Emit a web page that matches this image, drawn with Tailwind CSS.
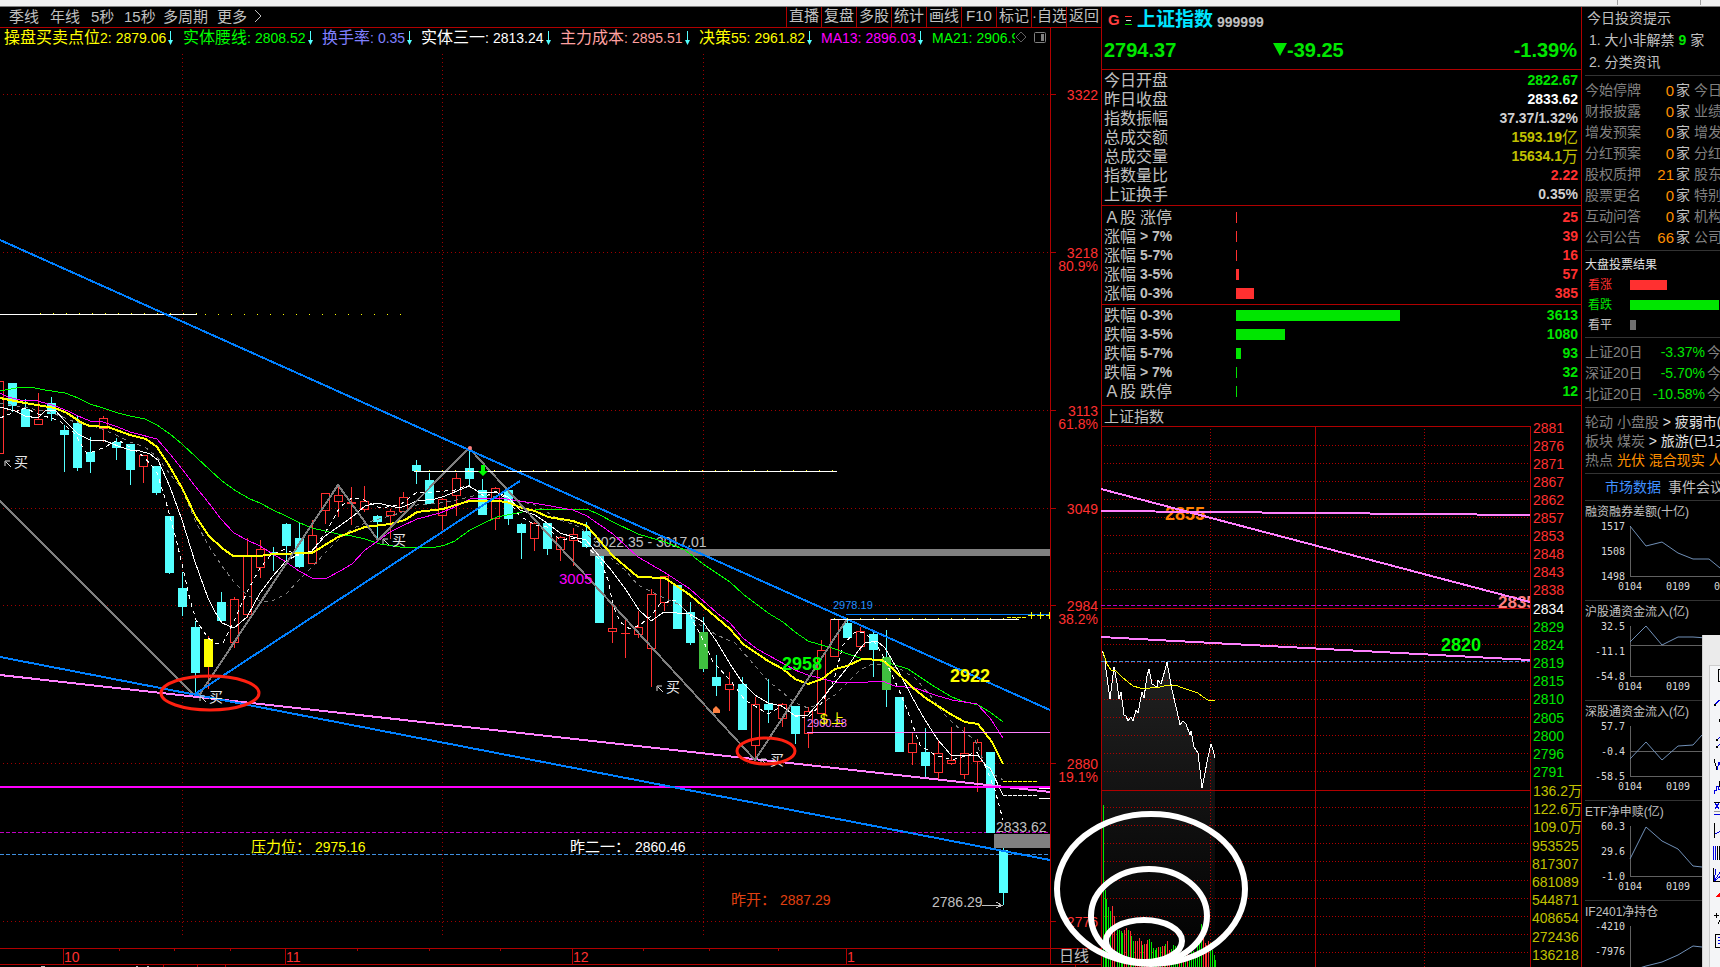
<!DOCTYPE html>
<html lang="zh-CN">
<head>
<meta charset="utf-8">
<meta name="viewport" content="width=device-width, initial-scale=1">
<title>上证指数 999999</title>
<script src="https://cdn.jsdelivr.net/npm/@tailwindcss/browser@4"></script>
</head>
<body class="bg-black">
<div class="relative flex h-screen flex-col overflow-hidden bg-black font-['Liberation_Sans','Noto_Sans_CJK_SC',sans-serif] whitespace-nowrap text-[#c0c0c0]">
  <div class="flex h-[7px] shrink-0 justify-end border-b border-[#808080] bg-[#f0f0f0] pr-[19px]">
    <div class="h-[5px] w-[84px] border-x border-[#a0a0a0]"></div>
  </div>
  <div class="flex min-h-0 flex-1">

    <!-- K-line panel -->
    <section class="flex min-w-0 flex-1 flex-col">
      <nav class="flex h-[21px] shrink-0 justify-between border-b border-[#b00000] text-[15px] leading-[15px]">
        <div class="flex pl-[9px] *:pb-[2px]">
          <button type="button" class="w-[41px] text-left">季线</button>
          <button type="button" class="w-[41px] text-left">年线</button>
          <button type="button" class="w-[33px] text-left">5秒</button>
          <button type="button" class="w-[39px] text-left">15秒</button>
          <button type="button" class="w-[54px] text-left">多周期</button>
          <button type="button" class="w-[37px] text-left">更多</button>
          <button type="button" aria-label="更多周期"><svg class="h-[14px] w-[9px]" viewBox="0 0 9 14" fill="none" stroke="#c0c0c0"><path d="M1 1L7 7L1 13"/></svg></button>
        </div>
        <div class="flex *:w-[35px] *:border-l *:border-[#b00000] *:pb-[3px] *:text-center">
          <button type="button">直播</button>
          <button type="button">复盘</button>
          <button type="button">多股</button>
          <button type="button">统计</button>
          <button type="button">画线</button>
          <button type="button">F10</button>
          <button type="button">标记</button>
          <button type="button">·自选</button>
          <button type="button">返回</button>
        </div>
      </nav>
      <div class="mr-[50px] flex h-[19px] shrink-0 border-r border-[#b00000] pl-1 leading-[18px]">
        <div id="indicators" class="flex min-w-0 max-w-[1013px] flex-1 overflow-hidden"></div>
        <svg class="mr-[3px] ml-auto h-[18px] w-[32px] shrink-0" viewBox="0 0 32 18" fill="none" stroke="#808080"><path d="M1 9L6 4L11 9L6 14Z" stroke="#606060"/><rect x="19.500" y="4.500" width="11" height="10" rx="1"/><rect x="26" y="6" width="3" height="7" fill="#808080" stroke="none"/></svg>
      </div>
      <svg id="kline" class="min-h-0 w-full flex-1" viewBox="0 47 1101 920" preserveAspectRatio="xMinYMin slice"></svg>
    </section>

    <!-- Quote panel -->
    <section class="flex w-[481px] shrink-0 flex-col border-x border-[#b00000]">
      <header class="shrink-0 border-b border-[#b00000] pr-1 pl-[2px]">
        <div class="flex h-[27px] items-center pl-1">
          <span class="w-[16px] text-[15px] font-bold text-[#ff4040]">G</span>
          <svg class="h-[12px] w-[9px]" viewBox="0 0 9 12" shape-rendering="crispEdges"><path d="M1 1.500H8" stroke="#ff3030"/><path d="M2 5.500H7" stroke="#e0e0e0"/><path d="M1 9.500H8" stroke="#00e600"/></svg>
          <h1 class="ml-1 text-[19px] font-bold text-[#00e5ff]">上证指数</h1>
          <span class="ml-1 pt-[3px] text-[14px] font-bold">999999</span>
        </div>
        <div class="flex h-[35px] items-center justify-between pb-1 text-[20px] leading-[30px] font-bold text-[#00e600]">
          <span class="w-[169px]">2794.37</span>
          <span class="flex flex-1 items-center"><svg class="h-[13px] w-[14px]" viewBox="0 0 14 13" fill="#00e600"><path d="M0 0H14L7 13Z"/></svg>-39.25</span>
          <span>-1.39%</span>
        </div>
      </header>
      <table class="block shrink-0 border-b border-[#b00000]"><tbody id="quote" class="block pt-[1px] pb-[1px]"></tbody></table>
      <table class="block shrink-0 border-b border-[#b00000]"><tbody id="rise" class="block pt-[2px] pb-[1px]"></tbody></table>
      <table class="block shrink-0 border-b border-[#b00000]"><tbody id="fall" class="block pt-[1px] pb-[4px]"></tbody></table>
      <h2 class="h-[19px] shrink-0 pl-[2px] text-[15px] leading-[21px]">上证指数</h2>
      <svg id="intraday" class="min-h-0 w-full flex-1 overflow-visible" viewBox="1102 425 479 542" preserveAspectRatio="xMinYMin slice"></svg>
    </section>

    <!-- News and market data panel -->
    <aside class="w-[138px] shrink-0 overflow-hidden pl-[3px] text-[14px]">
      <div class="border-b border-[#333] pb-[2px] leading-[22px]">
        <h2 class="pl-[2px]">今日投资提示</h2>
        <p class="pl-1">1. 大小非解禁 <b class="text-[#00e600]">9</b> 家</p>
        <p class="pl-1">2. 分类资讯</p>
      </div>
      <div id="news" class="border-b border-[#333] pt-1 pb-[2px]"></div>
      <div class="border-b border-[#333] pt-1 pb-[2px] text-[12px] leading-[20px]">
        <h2 class="text-[#e0e0e0]">大盘投票结果</h2>
        <div class="flex items-center pl-[3px] text-[#ff3030]"><span class="w-[42px]">看涨</span><i class="h-[10px] w-[37px] bg-[#ff3030]"></i></div>
        <div class="flex items-center pl-[3px] text-[#00e600]"><span class="w-[42px]">看跌</span><i class="h-[10px] w-[89px] bg-[#00e600]"></i></div>
        <div class="flex items-center pl-[3px]"><span class="w-[42px]">看平</span><i class="h-[10px] w-[6px] bg-[#707070]"></i></div>
      </div>
      <div id="returns" class="border-b border-[#333] pt-1 pb-[2px]"></div>
      <div class="border-b border-[#333] pt-[5px] pb-[3px] leading-[19px] text-[#808080]">
        <p>轮动 小盘股 <span class="text-[#e0e0e0]">&gt; 疲弱市(</span></p>
        <p>板块 煤炭 <span class="text-[#e0e0e0]">&gt; 旅游(已1天)</span></p>
        <p>热点 <span class="text-[#ff9000]">光伏 混合现实 人工</span></p>
      </div>
      <div class="flex h-[27px] gap-[7px] border-b border-[#333] pl-5 leading-[26px]">
        <button type="button" class="text-[#4090ff]">市场数据</button>
        <button type="button">事件会议</button>
      </div>
      <div id="trends"></div>
    </aside>
  </div>

  <!-- Hand-drawn ellipses over both chart panels -->
  <svg class="pointer-events-none absolute inset-0 h-full w-full" fill="none" stroke="#fff" stroke-width="6">
    <ellipse cx="1151" cy="889" rx="94" ry="75"/>
    <ellipse cx="1149" cy="916" rx="58" ry="47"/>
    <ellipse cx="1144" cy="941" rx="38" ry="21"/>
  </svg>

  <!-- Drawing toolbox window, docked partly outside the screen -->
  <div class="absolute right-0 bottom-0 h-[332px] w-[18px] border-l border-[#d0d0d0] bg-[#ebebeb] pt-[30px] pl-[6px]">
    <svg class="h-[302px] w-[11px]" viewBox="1709 665 11 302" preserveAspectRatio="xMinYMin slice" fill="none" stroke="#000" shape-rendering="crispEdges">
      <rect x="1709" y="665" width="20" height="310" fill="#f4f5f7" stroke="#ccc"/>
      <path d="M1721 669.500H1718.500V681.500H1721"/>
      <path d="M1714 705L1721 699" stroke="#0000e0"/><rect x="1714" y="704" width="2" height="2" fill="#000" stroke="none"/>
      <rect x="1719" y="719" width="2" height="3" fill="#000" stroke="none"/>
      <path d="M1717 740L1721 736M1717 747L1721 743" stroke="#0000e0"/><rect x="1716" y="739" width="2" height="2" fill="#000" stroke="none"/><rect x="1716" y="746" width="2" height="2" fill="#000" stroke="none"/>
      <path d="M1714 759L1717 770"/><path d="M1717 770L1719 762L1721 768" stroke="#0000e0"/>
      <path d="M1714 794V790H1716V786H1718V789H1720V784" stroke="#0000e0"/><path d="M1719 781V787"/>
      <path d="M1715 803L1719 809M1719 803L1715 809M1714 814.500H1721" stroke="#0000e0"/><path d="M1714 802.500H1721"/><path d="M1714 811.500H1721" stroke="#999"/>
      <path d="M1714.500 823V838"/><path d="M1715 834L1721 831" stroke="#0000e0"/>
      <path d="M1713.500 846V860M1715.500 846V860" stroke="#0000e0"/><path d="M1717.500 846V860M1719.500 846V860"/>
      <path d="M1713.500 868V881.500H1721"/><path d="M1714 881L1716 869M1714 881L1721 871M1714 881L1721 876" stroke="#0000e0"/>
      <path d="M1717 896L1720 893V896Z" fill="#f00" stroke="#f00"/>
      <path d="M1714 915.500H1719M1716.500 913V918M1718 924L1721 918"/>
      <path d="M1721 934.500H1715.500V947.500H1721"/><path d="M1718 937.500H1721M1718 940.500H1721M1718 943.500H1721" stroke="#0000e0"/>
    </svg>
  </div>
</div>

<script>
const FONT = "'Liberation Sans','Noto Sans CJK SC',sans-serif";
const line = (x1, y1, x2, y2, c, extra = '') => `<path d="M${x1} ${y1}L${x2} ${y2}" stroke="${c}" fill="none" shape-rendering="crispEdges" ${extra}/>`;
const h = (x1, x2, y, c, extra) => line(x1, y + 0.5, x2, y + 0.5, c, extra);
const v = (x, y1, y2, c, extra) => line(x + 0.5, y1, x + 0.5, y2, c, extra);
const box = (x, y, w, hh, c) => `<rect x="${x}" y="${y}" width="${w}" height="${hh}" fill="${c}" shape-rendering="crispEdges"/>`;
const poly = (pts, c, extra = '') => `<polyline points="${pts}" fill="none" stroke="${c}" shape-rendering="crispEdges" ${extra}/>`;
const text = (x, cy, s, c, size = 14, extra = '') => `<text x="${x}" y="${cy + Math.round(size * 0.36)}" fill="${c}" font-size="${size}" font-family="${FONT}" ${extra}>${s}</text>`;
const END = 'text-anchor="end"', BOLD = 'font-weight="bold"', RED = '#b00000', DARK = '#a00000';

/* indicator strip: Chinese name, Latin suffix, value */
document.getElementById('indicators').innerHTML = [
  ['操盘买卖点位', '2:', '2879.06', 'w-[179px] text-[#ffff00]'],
  ['实体腰线', ':', '2808.52', 'w-[139px] text-[#00ff00]'],
  ['换手率', ':', '0.35', 'w-[99px] text-[#8080ff]'],
  ['实体三一', ':', '2813.24', 'w-[139px] text-white'],
  ['主力成本', ':', '2895.51', 'w-[139px] text-[#ffa0a0]'],
  ['决策', '55:', '2961.82', 'w-[122px] text-[#ffff00]'],
  ['', 'MA13:', '2896.03', 'w-[111px] text-[#ff00ff]'],
  ['', 'MA21:', '2906.93', 'w-[111px] text-[#00ff00]'],
].map(([a, s, b, cls]) => `<div class="flex shrink-0 items-center text-[14px] ${cls}"><span class="text-[16px]">${a}</span><span>${s}</span><span class="ml-1">${b}</span><svg class="ml-[2px] h-[14px] w-[5px]" viewBox="0 0 5 14" fill="#54ffff"><path d="M2 0H3V9H5L2.500 14L0 9H2Z"/></svg></div>`).join('');

/* daily K-line chart */
const candles = [
 [-1,381,454,381,454,'r'],[12,383,406,383,412,'c'],[25,409,427,399,427,'c'],[38,419,425,393,425,'r'],[51,403,414,397,421,'c'],[64,430,435,425,472,'c'],
 [77,423,468,415,471,'c'],[90,452,462,437,473,'c'],[103,418,429,416,442,'r'],[116,442,448,438,460,'c'],[130,444,470,444,485,'c'],[143,455,467,455,483,'r'],
 [156,466,493,466,495,'c'],[169,516,573,516,574,'c'],[182,588,607,572,616,'c'],[195,627,673,621,694,'c'],[208,639,667,636,689,'y'],[221,602,621,592,623,'c'],
 [234,599,643,597,648,'r'],[247,555,615,538,618,'r'],[260,549,568,540,578,'r'],[273,552,553,547,571,'c'],[286,524,546,523,561,'c'],[299,538,567,522,568,'c'],
 [312,535,564,520,564,'r'],[325,493,511,493,524,'r'],[338,495,502,484,517,'r'],[351,502,504,487,525,'r'],[364,501,510,486,512,'r'],[377,516,522,515,540,'c'],
 [390,511,516,509,539,'r'],[403,497,512,492,512,'r'],[416,465,471,460,484,'c'],[429,480,504,473,504,'c'],[442,499,516,498,530,'r'],[456,478,496,473,516,'r'],
 [469,468,479,449,486,'c'],[482,490,515,479,515,'c'],[495,488,519,487,530,'r'],[508,490,519,490,525,'c'],[521,524,533,523,559,'c'],[534,523,539,522,551,'r'],
 [547,523,549,523,555,'c'],[560,537,550,536,561,'r'],[573,534,541,528,566,'r'],[586,531,547,522,548,'c'],[599,556,623,556,623,'c'],[612,628,632,604,643,'r'],
 [625,633,634,618,658,'r'],[638,627,635,611,638,'r'],[651,594,649,589,687,'r'],[664,576,603,576,611,'r'],[677,585,629,585,629,'c'],[690,612,643,602,645,'c'],
 [703,632,669,617,672,'g'],[716,677,686,655,696,'c'],[729,684,690,672,711,'r'],[742,684,730,677,730,'c'],[755,704,746,697,758,'r'],[768,704,710,679,723,'c'],
 [782,704,719,703,727,'r'],[795,706,734,706,744,'c'],[808,711,734,707,748,'r'],[821,650,714,640,714,'r'],[834,619,657,619,657,'r'],[847,623,638,619,638,'c'],
 [860,631,647,627,651,'r'],[873,634,650,632,677,'c'],[886,657,690,630,707,'g'],[899,697,752,697,752,'c'],[912,743,753,733,765,'r'],[925,752,766,728,778,'c'],
 [938,753,773,740,781,'r'],[951,760,764,727,765,'r'],[964,753,775,727,779,'r'],[977,742,762,739,792,'r'],[990,752,833,752,833,'c'],[1003,850,893,848,905,'c']];
const fills = { c: '#54ffff', g: '#40c040', y: '#ffff00' };
let k = '';
[94, 252, 410, 508, 605, 763, 921].forEach(y => { k += h(3, 1048, y, DARK, 'stroke-dasharray="1 3"') + h(1050, 1056, y, RED); });
[182, 442, 703].forEach(x => { k += v(x, 54, 936, DARK, 'stroke-dasharray="1 3"'); });
k += h(0, 1050, 832, '#c000c0', 'stroke-dasharray="4 2"') + h(0, 1050, 854, '#4090e0', 'stroke-dasharray="4 2"');
k += h(0, 197, 314, '#fff') + h(205, 405, 314, '#ffff00', 'stroke-dasharray="1 12"') + h(40, 200, 313, '#ffff00', 'stroke-dasharray="1 12"');
k += box(590, 549, 460, 7, '#808080') + box(994, 834, 56, 14, '#808080');
k += text(593, 542, '3022.35 - 3017.01', '#c0c0c0', 14);
candles.forEach(([x, t, b, wt, wb, s]) => {
  if (s === 'r') {
    k += box(x, wt, 1, t - wt, '#ff3030') + box(x, b, 1, wb - b, '#ff3030');
    k += b - t < 2 ? box(x - 4, t, 9, 1, '#ff3030') : `<rect x="${x - 3.5}" y="${t + 0.5}" width="8" height="${b - t - 1}" fill="none" stroke="#ff3030" shape-rendering="crispEdges"/>`;
  } else k += box(x, wt, 1, wb - wt, s === 'y' ? '#ff3030' : '#54ffff') + box(x - 4, t, 9, b - t, fills[s]);
});
k += poly('0,403 50,412 75,422 100,428 118,436 130,442 145,447 157,457 170,474 182,489 195,520 208,545 222,566 234,582 247,595 260,601 272,601 286,594 299,580 312,567 325,553 338,540 352,529 365,523 400,513 417,505 440,503 456,500 482,494 495,497 515,500 535,505 547,512 560,520 580,527 600,547 613,560 625,570 638,585 652,592 664,598 680,605 700,625 717,635 735,643 750,660 768,681 782,692 795,703 808,708 820,704 835,695 850,680 860,670 872,664 885,665 900,669 915,678 930,695 945,715 955,725 975,740 985,765 995,775 1003,780', '#808080', 'stroke-dasharray="4 4"');
k += poly('0,418 25,408 38,414 60,421 75,434 87,454 103,448 118,440 130,447 143,456 156,470 165,498 175,535 183,568 190,600 196,620 208,638 215,643 223,643 234,621 247,592 260,568 270,556 285,549 299,556 312,551 320,540 330,525 340,507 352,498 360,498 380,508 400,505 417,492 435,492 455,490 469,485 485,497 495,491 508,500 520,516 535,525 547,527 560,540 573,538 586,545 600,560 608,580 613,605 620,622 630,629 640,625 651,616 660,604 675,600 690,615 703,640 713,662 730,680 745,700 755,706 768,714 782,706 795,716 808,718 821,704 834,680 843,645 855,632 865,633 877,645 885,660 899,690 908,712 920,745 935,755 952,760 962,757 977,752 986,768 995,790 1003,820', '#fff', 'stroke-dasharray="4 4"');
k += poly('0,391 22,387 30,387 45,390 65,393 78,398 90,404 103,408 118,413 130,416 145,419 157,425 170,434 182,444 197,458 210,470 222,481 236,491 250,499 260,503 273,510 286,516 300,523 312,528 325,531 338,534 352,536 365,539 380,544 400,547 432,548 445,545 455,541 463,535 470,530 482,524 497,517 522,512 535,510 570,509 587,509 600,515 613,522 638,534 665,542 685,550 703,564 730,582 743,594 768,613 783,622 795,632 808,641 835,649 848,654 860,658 880,661 892,664 908,669 920,677 935,687 952,697 962,701 978,705 990,712 1003,722', '#00ff00');
k += poly('0,393 8,397 20,400 38,401 55,406 68,411 78,416 90,421 103,422 118,427 130,432 157,439 170,454 182,469 195,486 208,502 221,519 234,533 247,540 260,546 273,554 286,562 299,571 312,578 327,578 340,571 352,564 365,550 378,541 390,532 400,527 417,519 440,513 455,507 470,499 500,498 520,501 545,505 573,510 587,516 613,534 638,557 664,572 690,589 717,613 730,623 743,638 757,649 768,655 795,670 808,675 835,682 855,683 882,681 895,686 915,688 935,695 952,700 977,704 990,718 1003,738', '#ff00ff');
k += poly('0,407 15,411 25,416 38,418 45,411 55,410 65,421 78,434 90,440 103,440 118,446 130,450 140,451 150,454 158,460 170,487 182,520 195,562 208,598 215,612 222,623 234,628 247,617 260,593 273,576 286,561 299,554 312,551 325,536 338,527 352,517 365,506 377,503 400,508 417,501 435,499 445,496 469,486 480,493 495,492 508,497 520,510 535,515 547,523 560,533 573,537 586,540 600,557 612,571 626,590 639,610 651,621 664,612 690,614 703,622 717,642 730,664 742,682 755,695 768,703 782,706 795,716 808,715 821,700 834,684 847,668 858,651 865,643 877,641 885,648 899,672 912,697 925,720 938,740 951,755 978,755 986,766 990,768 1003,795', '#fff');
k += poly('0,398 25,403 55,408 67,413 82,423 90,426 108,427 130,435 146,439 157,447 170,467 182,488 196,517 209,536 222,548 233,556 260,556 273,554 312,553 338,537 365,527 390,524 405,520 417,512 443,509 469,501 497,501 507,502 522,508 535,511 548,517 573,521 587,526 600,541 613,556 638,577 665,578 690,595 717,618 730,629 743,644 768,661 783,669 795,679 808,684 822,679 835,669 847,666 862,659 882,660 892,668 913,688 927,699 952,715 965,722 978,724 992,742 1003,764', '#ffff00', 'stroke-width="2"');
const W2 = 'stroke-width="2"';
k += line(0, 675, 1050, 792, '#ff80ff', W2) + line(0, 787, 1050, 787, '#ff00ff', W2);
k += poly('0,501 193,694 200,694 338,485 378,540 469,448 755,760 847,619', '#808080', W2);
k += line(0, 240, 1050, 710, '#0080ff', W2) + line(0, 657, 1050, 860, '#0080ff', W2) + line(195, 694, 520, 481, '#0080ff', W2);
k += h(414, 837, 471, '#fff') + h(416, 837, 470, '#ffff00', 'stroke-dasharray="1 12"');
k += h(846, 1050, 614, '#0080ff') + h(831, 1019, 619, '#fff') + h(834, 1019, 618, '#ffff00', 'stroke-dasharray="1 12"') + h(1007, 1026, 617, '#ffff00', 'stroke-dasharray="4 1"');
[1031, 1040, 1049].forEach(x => { k += h(x - 3, Math.min(x + 4, 1050), 615, '#ffff00') + v(x, 612, 619, '#ffff00'); });
k += h(807, 1050, 732, '#ff80ff') + h(1003, 1037, 781, '#ffff00', 'stroke-dasharray="4 1"') + h(1003, 1037, 795, '#fff', 'stroke-dasharray="4 1"') + h(1039, 1050, 788, '#fff') + h(1039, 1050, 798, '#fff');
k += `<path d="M481 465H485V471H488L483 476L478 471H481Z" fill="#00ff00"/><path d="M713 713V709L716 706L720 710V713Z" fill="#ff8040"/><circle cx="470" cy="448" r="2" fill="#ff8080"/>`;
[[17, 462], [395, 540], [212, 697], [669, 687], [773, 760]].forEach(([x, y]) => {
  k += text(x - 3, y, '买', '#e8e8e8', 14) + `<path d="M${x - 6} ${y + 5}L${x - 11} ${y}M${x - 12} ${y + 4}V${y - 1}H${x - 7}" fill="none" stroke="#e0e0e0"/>`;
});
k += text(559, 579, '3005', '#ff00ff', 15) + text(782, 664, '2958', '#00ff00', 18, BOLD) + text(950, 676, '2922', '#ffff00', 18, BOLD);
k += text(833, 605, '2978.19', '#1e90ff', 11) + text(807, 723, '2900.28', '#ff80ff', 11) + text(820, 719, '$', '#ffff00', 14) + text(831, 718, '上', '#ffff00', 13);
k += text(996, 827, '2833.62', '#c0c0c0') + text(932, 902, '2786.29', '#c0c0c0') + poly('982,905.5 1001,905.5', '#c0c0c0') + poly('996,902 1002,905.5 996,908', '#c0c0c0');
k += text(251, 847, '压力位：', '#ffff00', 15) + text(315, 847, '2975.16', '#ffff00') + text(570, 847, '昨二一：', '#fff', 15) + text(635, 847, '2860.46', '#fff') + text(731, 900, '昨开：', '#e04010', 15) + text(780, 900, '2887.29', '#e04010');
k += `<g fill="none" stroke="#ff2010" stroke-width="3"><ellipse cx="210" cy="693" rx="49" ry="17"/><ellipse cx="766" cy="751" rx="29" ry="13"/></g>`;
[['3322', 95], ['3218', 253], ['80.9%', 266], ['3113', 411], ['61.8%', 424], ['3049', 509], ['2984', 606], ['38.2%', 619], ['2880', 764], ['19.1%', 777], ['2776', 922]].forEach(([s, y]) => { k += text(1098, y, s, '#ff3030', 14, END); });
k += v(1050, 40, 965, RED) + h(0, 1101, 948, RED) + h(0, 1101, 964, RED);
[[63, '10'], [285, '11'], [572, '12'], [846, '1']].forEach(([x, s]) => { k += v(x, 948, 964, RED) + text(x + 1, 957, s, '#ff3030', 14); });
[119, 174, 230, 357, 429, 500, 643, 709, 778].forEach(x => { k += v(x, 949, 951, RED); });
k += text(1059, 956, '日线', '#c0c0c0', 15) + [163, 197, 225, 1075].map(x => v(x, 965, 967, RED)).join('') + box(41, 966, 4, 1, '#c0c0c0') + box(136, 966, 2, 1, '#c0c0c0') + box(147, 966, 2, 1, '#c0c0c0');
document.getElementById('kline').innerHTML = k;

/* quote tables */
document.getElementById('quote').innerHTML = [
  ['今日开盘', '2822.67', '', 'text-[#00e600]'], ['昨日收盘', '2833.62', '', 'text-white'], ['指数振幅', '37.37/1.32%', '', 'text-[#d0d0d0]'],
  ['总成交额', '1593.19', '亿', 'text-[#c0c000]'], ['总成交量', '15634.1', '万', 'text-[#c0c000]'], ['指数量比', '2.22', '', 'text-[#ff3030]'], ['上证换手', '0.35%', '', 'text-[#d0d0d0]'],
].map(([a, b, u, c]) => `<tr class="flex h-[19px] items-center justify-between pr-[3px] pl-[2px] leading-[19px]"><th scope="row" class="text-[16px] font-normal">${a}</th><td class="flex text-[14px] font-bold ${c}">${b}<span class="text-[16px] font-normal">${u}</span></td></tr>`).join('');
const dist = (id, rows, bar, col) => {
  document.getElementById(id).innerHTML = rows.map(([a, b, n, w]) => `<tr class="flex h-[19px] items-center pr-[3px] pl-[2px] leading-[19px]"><th scope="row" class="flex w-[132px] gap-1 text-[16px] font-normal"><span>${a}</span>${b[0] === '*' ? `<span>${b.slice(1)}</span>` : `<b class="text-[14px]">${b}</b>`}</th><td class="flex-1"><div class="h-[11px] ${bar}" style="width:${w}px"></div></td><td class="text-[14px] font-bold ${col}">${n}</td></tr>`).join('');
};
dist('rise', [['Ａ股', '*涨停', 25, 1], ['涨幅', '&gt; 7%', 39, 1], ['涨幅', '5-7%', 16, 1], ['涨幅', '3-5%', 57, 3], ['涨幅', '0-3%', 385, 18]], 'bg-[#ff3030]', 'text-[#ff3030]');
dist('fall', [['跌幅', '0-3%', 3613, 164], ['跌幅', '3-5%', 1080, 49], ['跌幅', '5-7%', 93, 5], ['跌幅', '&gt; 7%', 32, 1], ['Ａ股', '*跌停', 12, 1]], 'bg-[#00e600]', 'text-[#00e600]');

/* intraday chart */
let m = `<defs><linearGradient id="fade" x1="0" y1="650" x2="0" y2="967" gradientUnits="userSpaceOnUse"><stop offset="0" stop-color="#222"/><stop offset="1" stop-color="#000"/></linearGradient><clipPath id="plot"><rect x="1101" y="420" width="429" height="547"/></clipPath></defs>`;
const price = '1102,651 1105,658 1106,670 1110,699 1114,667 1117,683 1119,699 1121,692 1124,715 1126,716 1128,721 1131,717 1133,721 1136,710 1138,713 1142,692 1144,698 1147,676 1149,669 1152,684 1157,687 1158,680 1161,684 1165,670 1167,662 1172,690 1177,711 1180,725 1183,721 1186,724 1190,735 1191,731 1194,747 1198,753 1200,770 1202,788 1205,773 1208,757 1211,744 1213,750 1215,758';
m += `<polygon points="${price} 1215,967 1102,967" fill="url(#fade)"/>`;
[445, 463, 481, 499, 517, 535, 553, 571, 589, 626, 644, 662, 680, 699, 717, 735, 753, 771, 807, 825, 843, 861, 880, 898, 916, 934, 952].forEach(y => { m += h(1104, 1528, y, RED, 'stroke-dasharray="1 2"'); });
m += v(1210, 429, 967, RED, 'stroke-dasharray="1 2"') + v(1424, 429, 967, RED, 'stroke-dasharray="1 2"') + v(1315, 426, 967, RED) + v(1530, 426, 967, RED);
[426, 608, 790].forEach(y => { m += h(1101, 1530, y, RED); });
m += h(1101, 1500, 605, '#c000c0', 'stroke-dasharray="4 2"') + h(1101, 1530, 661, '#4090e0', 'stroke-dasharray="4 2"');
m += text(1165, 514, '2855', '#ff8000', 18, BOLD) + text(1498, 602, '2835', '#ff8080', 17, `${BOLD} clip-path="url(#plot)"`) + text(1441, 645, '2820', '#00ff00', 18, BOLD);
m += line(1101, 489, 1530, 602, '#ff80ff', W2) + line(1101, 511, 1530, 515, '#ff80ff', W2) + line(1101, 637, 1530, 660, '#ff80ff', W2);
m += poly(price, '#fff') + poly('1103,652 1107,664 1111,670 1116,671 1122,677 1128,682 1133,686 1140,688 1150,688 1160,687 1168,685 1175,685 1183,688 1192,691 1198,693 1203,697 1208,700 1215,701', '#ffff00');
[[1103,805,0],[1105,890,0],[1106,899,0],[1108,907,0],[1110,911,0],[1112,906,1],[1114,916,1],[1117,930,0],[1119,930,0],[1121,931,0],[1122,933,0],[1124,930,1],[1126,928,1],[1128,930,0],[1130,931,1],[1131,936,0],[1133,941,0],[1135,941,1],[1137,941,1],[1139,938,1],[1141,941,1],[1142,945,0],[1144,944,1],[1146,944,1],[1147,940,1],[1149,939,0],[1151,942,0],[1153,948,0],[1155,950,0],[1156,948,0],[1158,947,1],[1160,947,0],[1162,946,1],[1164,946,1],[1165,944,0],[1167,941,1],[1169,950,1],[1171,949,0],[1173,945,0],[1175,946,0],[1177,948,0],[1179,950,1],[1181,953,0],[1183,952,1],[1185,955,0],[1187,954,1],[1189,955,0],[1191,952,0],[1193,951,0],[1195,953,0],[1197,946,0],[1199,941,0],[1201,924,0],[1203,938,1],[1205,943,1],[1206,945,1],[1208,941,1],[1210,943,0],[1212,950,0],[1214,955,0],[1215,960,0]].forEach(([x, y, r]) => { m += box(x, y, 1, 967 - y, r ? '#ff3030' : '#00e600'); });
['2881','2876','2871','2867','2862','2857','2853','2848','2843','2838'].forEach((s, i) => { m += text(1533, 428 + i * 18, s, '#ff3030'); });
m += text(1533, 609, '2834', '#fff');
['2829','2824','2819','2815','2810','2805','2800','2796','2791'].forEach((s, i) => { m += text(1533, 627 + Math.round(i * 18.1), s, '#00e600'); });
['136.2万','122.6万','109.0万','953525','817307','681089','544871','408654','272436','136218'].forEach((s, i) => { m += text(i < 3 ? 1533 : 1532, 791 + Math.round(i * 18.2), s, '#c0c000', 14); });
document.getElementById('intraday').innerHTML = m;

/* news rows */
document.getElementById('news').innerHTML = [['今始停牌', 0, '今日'], ['财报披露', 0, '业绩'], ['增发预案', 0, '增发'], ['分红预案', 0, '分红'], ['股权质押', 21, '股东'], ['股票更名', 0, '特别'], ['互动问答', 0, '机构'], ['公司公告', 66, '公司']]
  .map(([a, n, b]) => `<div class="flex h-[21px] items-center leading-[21px] text-[#808080] *:shrink-0"><span>${a}</span><span class="w-[33px] text-right text-[15px] text-[#ff9000]">${n}</span><span class="ml-[2px] text-[#c0c0c0]">家</span><span class="ml-1">${b}</span></div>`).join('');
document.getElementById('returns').innerHTML = [['上证20日', '-3.37%'], ['深证20日', '-5.70%'], ['北证20日', '-10.58%']]
  .map(([a, n]) => `<div class="flex h-[21px] items-center leading-[21px] text-[#808080] *:shrink-0"><span class="w-[58px]">${a}</span><span class="w-[62px] text-right text-[#00e600]">${n}</span><span class="ml-[2px]">今年</span></div>`).join('');

/* market data sparklines */
document.getElementById('trends').innerHTML = [
  ['融资融券差额(十亿)', ['1517', '1508', '1498'], '48,25 64,45 80,41 96,52 111,58 127,58 138,67', 75],
  ['沪股通资金流入(亿)', ['32.5', '-11.1', '-54.8'], '48,41 64,25 80,44 96,36 111,36 138,38', 44],
  ['深股通资金流入(亿)', ['57.7', '-0.4', '-58.5'], '48,58 64,41 80,59 96,45 111,44 120,34 138,20', 50],
  ['ETF净申赎(亿)', ['60.3', '29.6', '-1.0'], '48,58 64,26 80,40 96,48 111,65 120,66 138,66', 75],
  ['IF2401净持仓', ['-4210', '-7976', '-11742'], '48,70 64,65 80,61 96,54 111,45 120,46 138,46', 75],
].map(([title, labels, pts, base]) => {
  const mono = `font-family="DejaVu Sans Mono,monospace" font-size="10" fill="#d8d8d8"`;
  return `<svg class="-ml-[3px] block h-[100px] w-[138px]" viewBox="0 0 138 100">` + text(3, 11, title, '#c0c0c0', 12)
    + labels.map((s, i) => `<text x="43" y="${29 + i * 25}" text-anchor="end" ${mono}>${s}</text>`).join('')
    + v(48, 25, 76, '#606060') + h(48, 138, 75, '#606060') + (base === 75 ? '' : h(48, 138, base, '#606060'))
    + `<polyline points="${pts}" fill="none" stroke="#7090b8"/>`
    + ['0104', '0109', '0115'].map((s, i) => `<text x="${48 + i * 48}" y="89" text-anchor="middle" ${mono}>${s}</text>`).join('')
    + h(3, 138, 99, '#333') + `</svg>`;
}).join('');
</script>
</body>
</html>
